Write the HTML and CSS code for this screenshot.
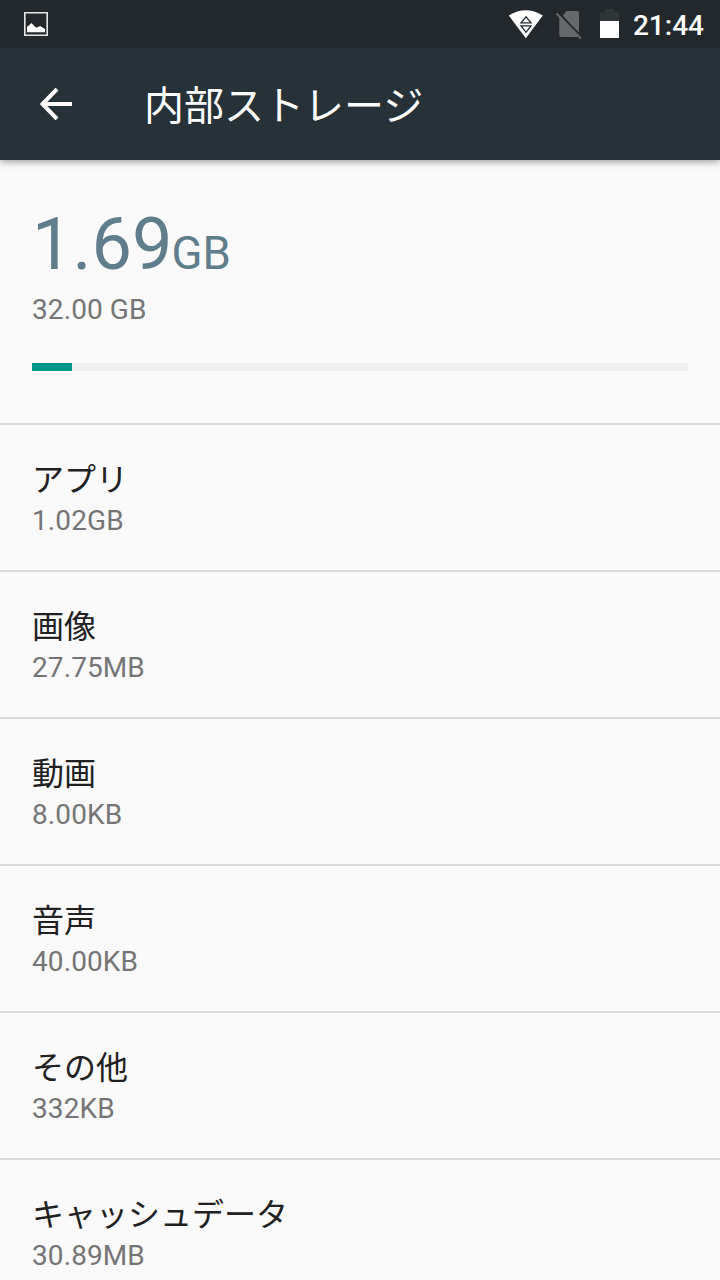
FILE: index.html
```html
<!DOCTYPE html>
<html lang="ja">
<head>
	<meta charset="UTF-8">
	<meta name="viewport" content="width=device-width,initial-scale=1">
	<title>内部ストレージ</title>
	<link rel="stylesheet" href="styles.css">
</head>
<body>
	<div class="status-bar">
		<svg class="icon-image" width="24" height="24" viewBox="0 0 24 24">
			<path d="M.8.8h22.4v22.4H.8z" fill="none" stroke="#e4e5e6" stroke-width="1.6"/>
			<path d="M3 20.300v-5.500l1.500-1 3-2.800 4 4.200 1.500.3 3-1.500 2.500 1.500 2.500 1.500v3.300z" fill="#fff"/>
		</svg>
		<div class="status-right">
			<svg class="icon-wifi" width="36" height="30" viewBox="0 0 36 30">
				<path d="M.8 5.500Q17.800-5 34.800 5.500L17.800 28.200z" fill="#fff"/>
				<path d="M13 12.900L18 6.800l5 6.100zM13 15.900h10L18 22.300z" fill="none" stroke="#23282c" stroke-width="1.300"/>
			</svg>
			<svg class="icon-sim" width="26" height="30" viewBox="0 0 26 30">
				<path d="M10.500 2H21q2 0 2 2v21L6.800 6.500zM3.300 7.500L22 27.500l-1 .5H5.300q-2 0-2-2z" fill="#66696c"/>
				<path d="M1.800 3.400l24.300 25" fill="none" stroke="#23282c" stroke-width="2"/>
				<path d="M.5 4.500l24.300 25" fill="none" stroke="#66696c" stroke-width="2"/>
			</svg>
			<svg class="icon-battery" width="19" height="29" viewBox="0 0 19 29">
				<path d="M5 0h9v3h5v9H0V3h5z" fill="#303538"/>
				<path d="M0 12h19v17H0z" fill="#fff"/>
			</svg>
			<span class="clock">21:44</span>
		</div>
	</div>

	<div class="app-bar">
		<svg class="back" width="32" height="32" viewBox="0 0 32 32">
			<path d="M32 16H3M17 1L2.500 16 17 31" fill="none" stroke="#fff" stroke-width="4"/>
		</svg>
		<h1>内部ストレージ</h1>
	</div>

	<div class="summary">
		<p class="used">1.69<span class="unit">GB</span></p>
		<p class="total">32.00 GB</p>
		<div class="progress"><div class="bar"></div></div>
	</div>

	<ul class="list">
		<li><h2>アプリ</h2><p>1.02GB</p></li>
		<li><h2>画像</h2><p>27.75MB</p></li>
		<li><h2>動画</h2><p>8.00KB</p></li>
		<li><h2>音声</h2><p>40.00KB</p></li>
		<li><h2>その他</h2><p>332KB</p></li>
		<li><h2>キャッシュデータ</h2><p>30.89MB</p></li>
	</ul>
</body>
</html>
```
FILE: styles.css
```css
* {
	padding: 0;
	margin: 0;
	box-sizing: border-box;
}

body {
	height: 1280px;
	overflow: hidden;
	background: #fafafa;
	font-family: Roboto, "Noto Sans CJK JP", sans-serif;
}

h1,
h2 {
	font-weight: 400;
}

svg {
	display: block;
}

/* status bar */
.status-bar {
	position: relative;
	z-index: 1;
	display: flex;
	justify-content: space-between;
	height: 48px;
	padding: 0 16px 0 24px;
	background: #23282c;
}

.icon-image {
	margin-top: 12px;
}

.status-right {
	display: flex;
}

.icon-wifi {
	margin: 10px 12px 0 0;
}

.icon-sim {
	margin: 9px 18px 0 0;
}

.icon-battery {
	margin: 9px 14px 0 0;
}

.clock {
	color: #fff;
	font-size: 28px;
	font-weight: 500;
	line-height: 52px;
}

/* title bar */
.app-bar {
	position: relative;
	display: flex;
	align-items: center;
	height: 112px;
	padding-left: 40px;
	background: #273238;
	box-shadow: 0 1px 8px rgba(0, 0, 0, 0.45);
}

.app-bar h1 {
	margin-left: 72px;
	padding-top: 6px;
	color: #fff;
	font-size: 40px;
	line-height: 60px;
}

/* used space */
.summary {
	height: 263px;
	padding: 43px 32px 0;
}

.used {
	height: 84px;
	color: #607d8b;
	font-size: 72px;
	line-height: 84px;
}

.unit {
	margin-left: -1px;
	font-size: 45.5px;
}

.total {
	margin-top: 6px;
	color: #757575;
	font-size: 28px;
	line-height: 34px;
	letter-spacing: 0.1px;
}

.progress {
	height: 8px;
	margin-top: 36px;
	background: #f0f0f0;
}

.bar {
	width: 40px;
	height: 8px;
	background: #009688;
}

/* categories */
.list li {
	height: 147px;
	padding: 32px 32px 0;
	border-top: 2px solid #dadada;
	list-style: none;
}

.list h2 {
	color: #212121;
	font-size: 32px;
	line-height: 46px;
}

.list p {
	margin-top: 1px;
	color: #757575;
	font-size: 28px;
	line-height: 34px;
	letter-spacing: 0.1px;
}
```
